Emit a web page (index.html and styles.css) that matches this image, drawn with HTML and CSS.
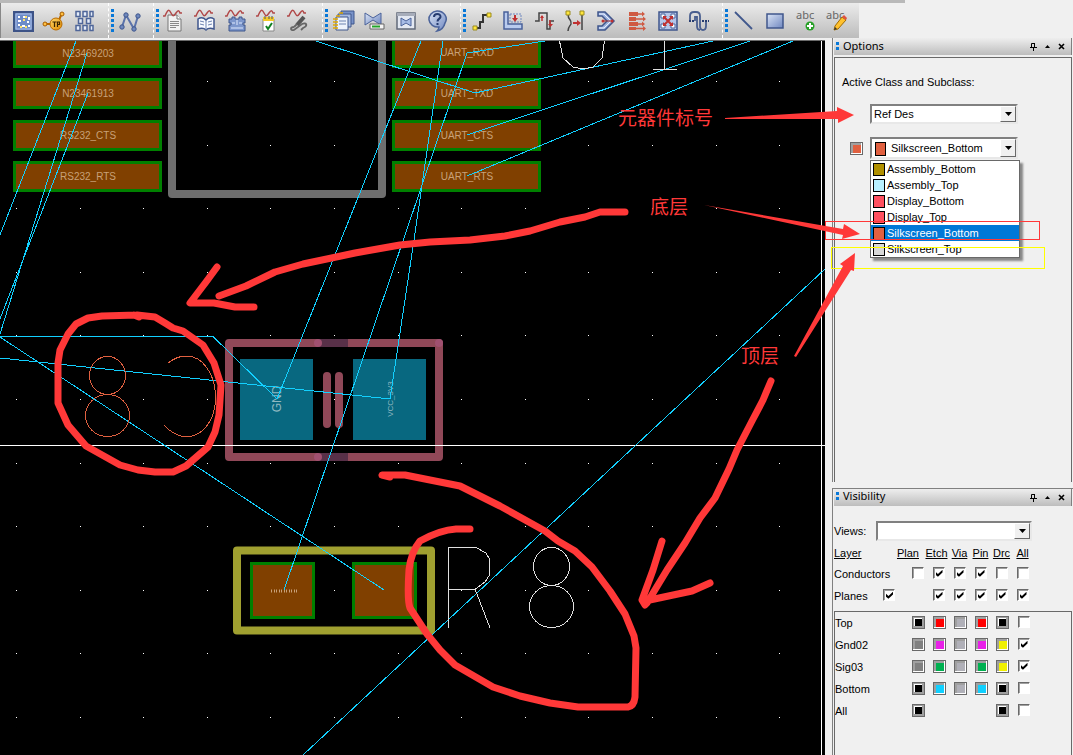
FILE: index.html
```html
<!DOCTYPE html>
<html lang="en">
<head>
<meta charset="utf-8">
<title>PCB Editor</title>
<link rel="stylesheet" href="styles.css">
</head>
<body>
<svg class="defs" aria-hidden="true">
  <defs>
    <linearGradient id="blue" x1="0" y1="0" x2="1" y2="1"><stop offset="0" stop-color="#dbe5f6"/><stop offset="1" stop-color="#6f87c0"/></linearGradient>
    <linearGradient id="gold" x1="0" y1="0" x2="1" y2="1"><stop offset="0" stop-color="#ffd76a"/><stop offset="1" stop-color="#e08a00"/></linearGradient>
    <path id="wave" d="M0 7h2C5 0 6 0 8 4s3 3 5 0 3-3 4 0h2" fill="none" stroke="#b04848" stroke-width="1.5"/>
    <path id="down" d="M0 0h7L3.500 4z"/>
  </defs>
</svg>
<header class="toolbar">
  <div class="strip"></div>
  <nav class="tools" aria-label="Toolbar">
    <div class="group first">
      <button class="tool" aria-label="Grid"><svg viewBox="0 0 24 24"><path d="M3 3h19v19H3z" fill="#6e8cc8" stroke="#3d5387" stroke-width="2"/><path d="M5 5h15v15H5z" fill="none" stroke="#a9bee6"/><path d="M7 7h2v2H7zm5 0h2v2h-2zm5 1h2v3h-2zM7 11h3v2H7zm9 1h2v2h-2zM7 15h2v2H7zm4 1h3v2h-3zm6 0h2v2h-2z" fill="#fff"/><path d="M12 10h2v2h-2zM14 7h2v2h-2zM9 17h2v2H9zM14 17h2v2h-2z" fill="#ffe36a"/></svg></button>
      <button class="tool" aria-label="Test point"><svg viewBox="0 0 24 24"><path d="M4 15h6M17 11l3-7" stroke="#b86a00" stroke-width="2"/><circle cx="3" cy="15" r="2" fill="#ffc040" stroke="#a65b00"/><circle cx="20" cy="5" r="2" fill="#ffc040" stroke="#a65b00"/><circle cx="14" cy="15" r="6" fill="url(#gold)" stroke="#b86a00"/><path d="M10.500 13h4M12.500 13v5M15.500 18v-5h2v2.500h-2" fill="none" stroke="#3b2600" stroke-width="1.200"/></svg></button>
      <button class="tool" aria-label="Pin array"><svg viewBox="0 0 24 24"><path d="M3 2.500h4v5H3zm7 0h4v5h-4zm7 0h3v5h-3zM5.500 9.500h4v5h-4zm8 0h4v5h-4zM3 16.500h4v5H3zm7 0h4v5h-4zm7 0h3v5h-3z" fill="#e4edfa" stroke="#4f6699" stroke-width="1.500"/></svg></button>
    </div>
    <div class="group"><i class="grip"></i>
      <button class="tool" aria-label="Nodes"><svg viewBox="0 0 24 24"><path d="M4 18L8 6l8 14 4-13" fill="none" stroke="#5a72aa" stroke-width="2"/><g fill="#6f88bd" stroke="#3f568c"><circle cx="4" cy="18" r="2.200"/><circle cx="8" cy="6" r="2.200"/><circle cx="16" cy="20" r="2.200"/><circle cx="20" cy="7" r="2.200"/></g></svg></button>
    </div>
    <div class="group"><i class="grip"></i>
      <button class="tool" aria-label="Report"><svg viewBox="0 0 24 24"><path d="M5 6h9l4 4v12H5z" fill="#f2f2f2" stroke="#777"/><path d="M14 6v4h4" fill="#fff" stroke="#777"/><path d="M7 12.500h9M7 14.500h9M7 16.500h9M7 18.500h6" stroke="#888"/><use href="#wave"/></svg></button>
      <button class="tool" aria-label="Library"><svg viewBox="0 0 24 24"><path d="M4 10c3-2 6-1 8 1 2-2 5-3 8-1v10c-3-1-6-1-8 1-2-2-5-2-8-1z" fill="#f7faff" stroke="#3f568c" stroke-width="1.500"/><path d="M12 11v10M6 12l4 1M6 15l4 1M14 13l4-1M14 16l4-1" stroke="#6d83b0"/><use href="#wave"/></svg></button>
      <button class="tool" aria-label="Model"><svg viewBox="0 0 24 24"><path d="M4 10h3V8h3v2h4V8h3v2h3v4h-2v2h2v6H4v-6h2v-2H4z" fill="#7d97cc" stroke="#3f568c"/><path d="M7 14h3m4 0h3M12 11v5M6 19h12" stroke="#e0eaff"/><use href="#wave"/></svg></button>
      <button class="tool" aria-label="Audit"><svg viewBox="0 0 24 24"><path d="M7 10h11v12H7z" fill="#fff" stroke="#888"/><path d="M7 8h11v4H7z" fill="#f2c928"/><path d="M9 7v3m4-3v3m3-3v3" stroke="#555"/><path d="M10 17l2 3 4-6" fill="none" stroke="#108020" stroke-width="2"/><use href="#wave"/></svg></button>
      <button class="tool" aria-label="Probe"><svg viewBox="0 0 24 24"><path d="M17 8l-7 8" stroke="#555" stroke-width="4"/><path d="M10 15l-3 3M7 18c-4 0-4 4 0 3l8-6c5-2 6 2 1 4l-2 2" fill="none" stroke="#666" stroke-width="1.800"/><use href="#wave"/></svg></button>
    </div>
    <div class="group"><i class="grip"></i>
      <button class="tool" aria-label="Pages"><svg viewBox="0 0 24 24"><path d="M9 2h13v13H9z" fill="#7892c8" stroke="#3f568c"/><path d="M6 5h13v13H6z" fill="#a9bce2" stroke="#3f568c"/><path d="M4 8h12v13H4z" fill="#eef3fc" stroke="#3f568c"/><path d="M7 12h7M7 15h7" stroke="#6d83b0"/><path d="M1 10h5M1 13h5M1 16h5M1 19h5M4 7h4M7 4h4" stroke="#e0a800" stroke-width="1.500"/></svg></button>
      <button class="tool" aria-label="Waive"><svg viewBox="0 0 24 24"><path d="M2 4l8 5 8-5v12l-8-5-8 5z" fill="url(#blue)" stroke="#4a629a"/><path d="M7 15h14v5H7z" fill="#f5f5f5" stroke="#666"/><path d="M9 16.500h8v2H9z" fill="#22a528"/></svg></button>
      <button class="tool" aria-label="Window"><svg viewBox="0 0 24 24"><path d="M3 4h18v16H3z" fill="#e3e8f2" stroke="#626a7a" stroke-width="1.500"/><path d="M3 4h18v3H3z" fill="#a7adba"/><path d="M7 9l5 3 5-3v8l-5-3-5 3z" fill="#a7bce6" stroke="#4a629a"/></svg></button>
      <button class="tool" aria-label="Help"><svg viewBox="0 0 24 24"><path d="M12 2a9 8 0 1 0 2 16c0 2-1 3-2 4 5-1 7-4 8-8A9 8 0 0 0 12 2z" fill="url(#blue)" stroke="#4a629a" stroke-width="1.500"/><path d="M9 8c0-4 7-4 6.500 0-.5 2-3 2-3 4.500M12.500 14v2" fill="none" stroke="#263c70" stroke-width="2"/></svg></button>
    </div>
    <div class="group"><i class="grip"></i>
      <button class="tool" aria-label="Route"><svg viewBox="0 0 24 24"><path d="M5 19h5v-6h3V6h4" fill="none" stroke="#333" stroke-width="2"/><path d="M3 17h4v4H3zM17 4h4v4h-4z" fill="#ffe63c" stroke="#9a8b20"/></svg></button>
      <button class="tool" aria-label="Shove"><svg viewBox="0 0 24 24"><path d="M3 3h4v12h14v5H3z" fill="#b9cbee" stroke="#4a629a" stroke-width="1.500"/><path d="M9 5h11v8H9z" fill="none" stroke="#6f87c0" stroke-dasharray="2 1"/><path d="M13 6v3h-2l3 4 3-4h-2V6z" fill="#c03030"/></svg></button>
      <button class="tool" aria-label="Delay tune"><svg viewBox="0 0 24 24"><path d="M3 12h4V4h8v16h3v-8h4" fill="none" stroke="#444" stroke-width="1.500"/><path d="M10 12V7m8 4v5" stroke="#c03030" stroke-width="1.500"/><path d="M8 9l2-3 2 3zM16 15h5l-2.500 3z" fill="#c03030"/></svg></button>
      <button class="tool" aria-label="Custom smooth"><svg viewBox="0 0 24 24"><path d="M5 5c0 7 4 5 3 10-1 2-3 3-3 7M19 5v16" fill="none" stroke="#444" stroke-width="1.500"/><path d="M10 14h5" stroke="#c03030" stroke-width="2"/><path d="M14 11l4 3-4 3z" fill="#c03030"/><path d="M3 2h4v4H3zM17 2h4v4h-4z" fill="#ffe63c" stroke="#9a8b20"/></svg></button>
      <button class="tool" aria-label="Fan out"><svg viewBox="0 0 24 24"><path d="M4 3h7l9 9-9 9H4v-4h4l5-5-5-5H4z" fill="#9db3df" stroke="#3f568c" stroke-width="1.500"/><path d="M5 5h5l7 7-7 7H5" fill="none" stroke="#e9f0ff"/><path d="M8 12h10" stroke="#a03030"/><circle cx="9" cy="12" r="1.500" fill="#c03030"/><circle cx="18" cy="12" r="1.500" fill="#c03030"/></svg></button>
      <button class="tool" aria-label="Bus route"><svg viewBox="0 0 24 24"><path d="M4 3h9v4H4zm0 5h7v4H4zm0 5h9v4H4zm0 5h7v3H4z" fill="#cf5a42"/><path d="M11 5h8M9 10h11M11 15h8M9 19.500h11" stroke="#cf5a42" stroke-width="1.500"/><path d="M17 2.500L20 5l-3 2.500zM18 7.500l3 2.500-3 2.500zM17 12.500l3 2.500-3 2.500zM18 17l3 2.500-3 2.500z" fill="#cf5a42"/></svg></button>
      <button class="tool" aria-label="Spread"><svg viewBox="0 0 24 24"><path d="M3 3h18v18H3z" fill="#b4c6ea" stroke="#3f568c" stroke-width="1.500"/><path d="M5 5h4v4H5zm10 0h4v4h-4zM5 15h4v4H5zm10 0h4v4h-4z" fill="#fff" stroke="#4a629a"/><path d="M8 8l8 8m0-8l-8 8" stroke="#c03030" stroke-width="2"/><path d="M7 7h4L7 11zm10 0v4l-4-4zM7 17v-4l4 4zm10 0h-4l4-4z" fill="#c03030"/></svg></button>
      <button class="tool" aria-label="Loop"><svg viewBox="0 0 24 24"><path d="M3 11V7q0-4 4-4h2q4 0 4 4v10q0 4 3 4t3-4v-5M8 12V8h2v9q0 4 3 4" fill="none" stroke="#4a5f8f" stroke-width="1.800"/><path d="M2 12h5m8 0h7" stroke="#263c70" stroke-width="2" stroke-dasharray="2 1"/></svg></button>
    </div>
    <div class="group"><i class="grip"></i>
      <button class="tool" aria-label="Line"><svg viewBox="0 0 24 24"><path d="M3 3l17 17" stroke="#40578c" stroke-width="1.800"/></svg></button>
      <button class="tool" aria-label="Rectangle"><svg viewBox="0 0 24 24"><path d="M4 5h16v14H4z" fill="url(#blue)" stroke="#40578c" stroke-width="1.500"/></svg></button>
      <button class="tool" aria-label="Add text"><svg viewBox="0 0 24 24"><text x="2" y="10" class="abc">abc</text><circle cx="16" cy="17" r="4.500" fill="#28a028"/><path d="M16 14v6m-3-3h6" stroke="#fff" stroke-width="2"/></svg></button>
      <button class="tool" aria-label="Edit text"><svg viewBox="0 0 24 24"><text x="1" y="10" class="abc">abc</text><path d="M10 17l7-9 4 3-8 9-4 1z" fill="#ffc12e" stroke="#a06a00"/><path d="M17 8l4 3 1-2-3-3z" fill="#e05040"/><path d="M9 21l1-3 2 2z" fill="#333"/></svg></button>
    </div>
  </nav>
</header>
<div class="workspace">
  <main class="board">
    <svg class="drawing" role="img" aria-label="Board layout">
      <g transform="translate(0 -41)">
        <g class="dots">
          <path d="M16 81.500H825M16 145.500H825M16 208.500H825M16 272.500H825M16 335.500H825M16 399.500H825M16 463.500H825M16 526.500H825M16 590.500H825M16 653.500H825M16 717.500H825"/>
        </g>
        <g class="pad">
          <path d="M14.500 30.500h146v36h-146zM14.500 79.500h146v28h-146zM14.500 121.500h146v28h-146zM14.500 162.500h146v28h-146zM393.500 30.500h146v36h-146zM393.500 79.500h146v28h-146zM393.500 121.500h146v28h-146zM393.500 162.500h146v28h-146zM251.500 563.500h62v54h-62zM353.500 563.500h62v54h-62z"/>
        </g>
        <path d="M172 41V194H382V41" fill="none" stroke="#6e6e6e" stroke-width="8" stroke-linejoin="round"/>
        <path d="M237 550.500H431V630.500H237z" fill="none" stroke="#a0a030" stroke-width="8" stroke-linejoin="round"/>
        <path d="M240 359h73v81h-73zM353 359h73v81h-73z" fill="#086880"/>
        <path d="M229 343H439V457H229z" fill="none" stroke="#904858" stroke-width="8" stroke-linejoin="round"/>
        <path d="M318 343h30M318 457h30" stroke="#583048" stroke-width="8"/>
        <g fill="#a05070"><circle cx="318" cy="343" r="4"/><circle cx="318" cy="457" r="4"/><circle cx="439" cy="343" r="4"/></g>
        <path d="M327 376V424M339 376V424" stroke="#904858" stroke-width="8" stroke-linecap="round"/>
        <g class="net">
          <text x="88" y="57">N23469203</text><text x="88" y="97">N23461913</text><text x="88" y="139">RS232_CTS</text><text x="88" y="180">RS232_RTS</text>
          <text x="467" y="56">UART_RXD</text><text x="467" y="97">UART_TXD</text><text x="467" y="139">UART_CTS</text><text x="467" y="180">UART_RTS</text>
        </g>
        <path d="M271 591h26" stroke="#c8a078" stroke-width="3" stroke-dasharray="1 2 1 1"/>
        <text class="gnd" transform="translate(281 399) rotate(-90)">GND</text>
        <text class="vcc" transform="translate(393 399) rotate(-90)">VCC_3V3</text>
        <path class="white" d="M0 445.500H825M821.500 41V755"/>
        <g class="rats">
          <path d="M76 41L0 235M87 53L0 334M88 93L0 319M0 336.500H213L277 399M0 358L390 399M0 337L384 590M316 41L475 93L713 41M545 41L467 53L284 590M421 41L277 399M443 41L414 240L390 399M467 135L750 41M467 176L793 41M825 269L303 755"/>
        </g>
        <g class="silk bottom">
          <ellipse cx="107.500" cy="375.500" rx="18" ry="19"/><ellipse cx="107.500" cy="415.500" rx="22" ry="21"/>
          <path d="M168 363Q177 356 186 356Q199 356 207 368Q216 380 215.500 400Q215 416 206 427Q197 437 186 437Q174 436 164 425"/>
        </g>
        <g class="silk top">
          <path d="M448.500 628V547.500H476L486 553L489.500 559V575L485 582L475 589.500H448M475 589L490 628M559.500 41L563 58L573 67L583 69L593 67L602 58L604.500 41M664.500 41V69M653 69.500H677"/>
          <ellipse cx="551.500" cy="566.500" rx="18" ry="19"/><ellipse cx="551.500" cy="606.500" rx="22" ry="21"/>
        </g>
      </g>
    </svg>
  </main>
  <aside class="side">
    <section class="panel options">
      <div class="title"><i class="grip small"></i><h2>Options</h2>
        <button class="mini" aria-label="Pin"><svg viewBox="0 0 7 9"><path d="M1.500 5V1.500h3V5M0 5.500h7M3.500 6v3M4.500 1v4" fill="none" stroke="#000"/></svg></button>
        <button class="mini" aria-label="Collapse"><svg viewBox="0 0 7 9"><path d="M1 6h5L3.500 3z"/></svg></button>
        <button class="mini" aria-label="Close"><svg viewBox="0 0 7 9"><path d="M1 2l5 5M6 2L1 7" stroke="#000" stroke-width="1.600"/></svg></button>
      </div>
      <div class="body">
        <label class="caption" for="cls">Active Class and Subclass:</label>
        <div class="field"><span class="combo"><select id="cls"><option>Ref Des</option></select><span class="arrow"><svg viewBox="0 0 7 4"><use href="#down"/></svg></span></span></div>
        <div class="field sub">
          <button class="swatch orange" aria-label="Subclass colour"></button>
          <span class="combo tall"><i class="chip orange"></i><select class="indent" aria-label="Subclass"><option>Silkscreen_Bottom</option></select><span class="arrow"><svg viewBox="0 0 7 4"><use href="#down"/></svg></span>
            <ul class="list" role="listbox" aria-label="Subclasses">
              <li role="option"><i class="chip olive"></i>Assembly_Bottom</li>
              <li role="option"><i class="chip pale"></i>Assembly_Top</li>
              <li role="option"><i class="chip rose"></i>Display_Bottom</li>
              <li role="option"><i class="chip rose"></i>Display_Top</li>
              <li role="option" aria-selected="true"><i class="chip orange"></i>Silkscreen_Bottom</li>
              <li role="option"><i class="chip silver"></i>Silkscreen_Top</li>
            </ul>
          </span>
        </div>
      </div>
    </section>
    <section class="panel visibility">
      <div class="title"><i class="grip small"></i><h2>Visibility</h2>
        <button class="mini" aria-label="Pin"><svg viewBox="0 0 7 9"><path d="M1.500 5V1.500h3V5M0 5.500h7M3.500 6v3M4.500 1v4" fill="none" stroke="#000"/></svg></button>
        <button class="mini" aria-label="Collapse"><svg viewBox="0 0 7 9"><path d="M1 6h5L3.500 3z"/></svg></button>
        <button class="mini" aria-label="Close"><svg viewBox="0 0 7 9"><path d="M1 2l5 5M6 2L1 7" stroke="#000" stroke-width="1.600"/></svg></button>
      </div>
      <div class="views"><label for="views">Views:</label><span class="combo"><select id="views"><option></option></select><span class="arrow"><svg viewBox="0 0 7 4"><use href="#down"/></svg></span></span></div>
      <table class="layers">
        <colgroup><col class="name"><col class="extra"><col class="c"><col class="c"><col class="c"><col class="c"><col class="c"><col class="c"></colgroup>
        <tr class="heads"><th>Layer</th><th colspan="2" class="plan">Plan</th><th><span class="wide">Etch</span></th><th>Via</th><th>Pin</th><th>Drc</th><th>All</th></tr>
        <tr><th colspan="2">Conductors</th><td><input type="checkbox" aria-label="Conductors plan"></td><td><input type="checkbox" checked aria-label="Conductors etch"></td><td><input type="checkbox" checked aria-label="Conductors via"></td><td><input type="checkbox" checked aria-label="Conductors pin"></td><td><input type="checkbox" aria-label="Conductors drc"></td><td><input type="checkbox" aria-label="Conductors all"></td></tr>
        <tr><th>Planes</th><td class="lead"><input type="checkbox" checked aria-label="Planes"></td><td></td><td><input type="checkbox" checked aria-label="Planes etch"></td><td><input type="checkbox" checked aria-label="Planes via"></td><td><input type="checkbox" checked aria-label="Planes pin"></td><td><input type="checkbox" checked aria-label="Planes drc"></td><td><input type="checkbox" checked aria-label="Planes all"></td></tr>
      </table>
      <div class="stack">
        <table class="layers">
          <colgroup><col class="name"><col class="extra"><col class="c"><col class="c"><col class="c"><col class="c"><col class="c"><col class="c"></colgroup>
          <tr><th colspan="2">Top</th><td><button class="swatch black" aria-label="Top plan"></button></td><td><button class="swatch red" aria-label="Top etch"></button></td><td><button class="swatch gray" aria-label="Top via"></button></td><td><button class="swatch red" aria-label="Top pin"></button></td><td><button class="swatch black" aria-label="Top drc"></button></td><td><input type="checkbox" aria-label="Top all"></td></tr>
          <tr><th colspan="2">Gnd02</th><td><button class="swatch dark" aria-label="Gnd02 plan"></button></td><td><button class="swatch magenta" aria-label="Gnd02 etch"></button></td><td><button class="swatch gray" aria-label="Gnd02 via"></button></td><td><button class="swatch magenta" aria-label="Gnd02 pin"></button></td><td><button class="swatch yellow" aria-label="Gnd02 drc"></button></td><td><input type="checkbox" checked aria-label="Gnd02 all"></td></tr>
          <tr><th colspan="2">Sig03</th><td><button class="swatch dark" aria-label="Sig03 plan"></button></td><td><button class="swatch green" aria-label="Sig03 etch"></button></td><td><button class="swatch gray" aria-label="Sig03 via"></button></td><td><button class="swatch green" aria-label="Sig03 pin"></button></td><td><button class="swatch yellow" aria-label="Sig03 drc"></button></td><td><input type="checkbox" checked aria-label="Sig03 all"></td></tr>
          <tr><th colspan="2">Bottom</th><td><button class="swatch black" aria-label="Bottom plan"></button></td><td><button class="swatch cyan" aria-label="Bottom etch"></button></td><td><button class="swatch gray" aria-label="Bottom via"></button></td><td><button class="swatch cyan" aria-label="Bottom pin"></button></td><td><button class="swatch black" aria-label="Bottom drc"></button></td><td><input type="checkbox" aria-label="Bottom all"></td></tr>
          <tr><th colspan="2">All</th><td><button class="swatch black" aria-label="All plan"></button></td><td></td><td></td><td></td><td><button class="swatch black" aria-label="All drc"></button></td><td><input type="checkbox" aria-label="All all"></td></tr>
        </table>
      </div>
    </section>
  </aside>
</div>
<svg class="notes">
  <path d="M825.500 221.500H1039.500V239.500H825.500z" class="frame"/>
  <path d="M831.500 247.500H1044.500V268.500H831.500z" class="frame yellow-line"/>
  <g class="ink">
    <path d="M137 315L102 316L88 318L76 324L68 334L60 350L58 363V403L68 425L86 446L120 465L138 470L155 472H173L186 466L208 447L215 432L219 415L221 385L214 363L203 345L183 331L173 328L165 323L155 317L137 315M134 315L139 317"/>
    <path d="M625 212H600L585 217L560 222L530 231L505 236L470 240L430 242L400 245L355 253L303 264L275 272L246 286L219 296M217 267L206 282L190 303L214 303L235 307H254"/>
    <path d="M390 477L382 475H405L430 480L460 486L500 506L545 531L558 541L575 551L592 567L610 591L625 614L634 636L636 648L635 697Q634 706 628 707H578L550 703L520 696L493 687L455 665L440 650L427 634L410 608Q407 600 409 570Q411 552 420 541Q440 530 456 529H470"/>
    <path d="M771 381L763 400L752 421L737 450L729 469L715 498L700 518L685 543L667 570L647 603M662 541L653 570L642 600L645 605M710 583L692 591L645 601"/>
  </g>
  <g class="pointer">
    <path d="M725 118L837 111V107L854 115L838 123V119L725 119z"/>
    <path d="M704 205L843 229L844 224L860 234L842 239L843 235z"/>
    <path d="M794 356L843 266L840 264L855 253L854 271L851 270L796 357z"/>
  </g>
  <g class="zh"><text x="618" y="125">元器件标号</text><text x="650" y="214">底层</text><text x="741" y="363">顶层</text></g>
</svg>
</body>
</html>
```

FILE: styles.css
```css
* { box-sizing: border-box; }
body {
  margin: 0;
  height: 100vh;
  display: flex;
  flex-direction: column;
  position: relative;
  overflow: hidden;
  background: #f0f0f0;
  color: #000;
  font: 11px/14px "Liberation Sans", Arial, sans-serif;
}
button { padding: 0; border: 0; background: none; }
.defs { position: absolute; width: 0; height: 0; }

.strip { width: 905px; max-width: 100%; height: 3px; background: #b9b9b9; }
.tools {
  display: flex;
  width: fit-content;
  height: 35px;
  background: linear-gradient(#ebebeb, #bcbcbc);
}
.group {
  display: flex;
  align-items: center;
  padding-right: 8px;
  border-left: 1px dashed #fff;
}
.group.first { border-left: 1px solid #888; padding-left: 6px; }
.group:last-child { padding-right: 7px; }
.grip {
  flex: none;
  width: 3px;
  height: 23px;
  margin-left: 2px;
  background: repeating-linear-gradient(#0878d8 0 3px, transparent 3px 5px);
}
.tool { display: grid; place-items: center; width: 31px; height: 30px; }
.tool svg { width: 24px; height: 24px; }
.abc { font: 11px "Noto Sans", sans-serif; fill: #666; }

.workspace { flex: 1; display: flex; min-height: 0; }
.board {
  flex: 1;
  min-width: 0;
  margin-top: 2px;
  border-top: 1px solid #6a6a6a;
  background: #000;
}
.drawing { display: block; width: 100%; height: 100%; }
.dots path { stroke: #fff; stroke-dasharray: 1 62.6; shape-rendering: crispEdges; }
.pad path { fill: #804000; stroke: #008000; stroke-width: 3; }
.net text { font-size: 10px; fill: #c8a078; text-anchor: middle; }
.gnd, .vcc { fill: #90b8c0; text-anchor: middle; }
.gnd { font-size: 12px; }
.vcc { font-size: 8px; }
.white { stroke: #fff; }
.rats path, .silk * { fill: none; shape-rendering: crispEdges; }
.rats { stroke: #12d0ff; }
.bottom { stroke: #e06040; }
.top { stroke: #e0e0e0; }

.side { width: 248px; padding-left: 7px; display: flex; flex-direction: column; gap: 6px; }
.panel {
  min-height: 0;
  display: flex;
  flex-direction: column;
  border-left: 1px solid #808080;
  padding: 0 1px;
}
.options { flex: 5 1 0; }
.visibility { flex: 3 1 0; border-top: 1px solid #808080; }
.title {
  display: flex;
  align-items: center;
  height: 17px;
  padding: 0 3px 2px 0;
  background: linear-gradient(#eee, #bdbdbd);
  border-right: 1px solid #808080;
}
.grip.small { height: 8px; }
.title h2 { flex: 1; margin: 0 0 0 4px; font: 11px/14px "Noto Sans", sans-serif; }
.mini { display: flex; justify-content: center; width: 14px; padding-top: 2px; }
.mini svg { width: 7px; height: 9px; }
.body {
  flex: 1;
  margin-top: 2px;
  border: 1px solid #696969;
  border-bottom: 0;
  padding: 17px 8px 0 7px;
}
.caption { display: block; }
.field { display: flex; align-items: center; margin: 15px 0 0 28px; }
.field.sub { margin: 13px 0 0 8px; gap: 7px; }
.combo {
  position: relative;
  display: flex;
  width: 148px;
  height: 20px;
  border: 2px solid;
  border-color: #808080 #e8e8e8 #e8e8e8 #808080;
  background: #fff;
}
.combo.tall { height: 22px; }
.combo select {
  flex: 1;
  min-width: 0;
  appearance: none;
  border: 0;
  padding: 0 0 0 2px;
  background: none;
  color: #000;
  font: inherit;
}
.combo .indent { padding-left: 5px; }
.arrow {
  display: grid;
  place-items: center;
  width: 16px;
  background: #f0f0f0;
  border: 1px solid;
  border-color: #fff #696969 #696969 #fff;
}
.arrow svg { width: 7px; height: 4px; }
.chip { flex: none; width: 12px; height: 13px; border: 1px solid #000; }
.combo > .chip { margin: 3px 0 0 3px; height: 14px; width: 11px; }
.list {
  position: absolute;
  top: 21px;
  left: -2px;
  width: 150px;
  margin: 0;
  padding: 0;
  list-style: none;
  background: #fff;
  border: 1px solid #696969;
  box-shadow: 3px 3px 2px #888;
}
.list li { display: flex; align-items: center; height: 16px; padding-left: 2px; gap: 2px; }
.list li[aria-selected] { background: #0078d7; color: #fff; }
.olive { background: #b09000; }
.pale { background: #b8f0ff; }
.rose { background: #ff5060; }
.orange { background: #e06040; }
.silver { background: #d8d8d8; }

.swatch {
  display: inline-block;
  width: 13px;
  height: 13px;
  border: 1px solid #696969;
  box-shadow: inset -1px -1px #fff, inset 2px 2px #a0a0a0;
  vertical-align: top;
}
.black { background: #000; box-shadow: inset 1px 1px #a0a0a0, inset -2px -2px #a0a0a0, inset 2px 2px #fff; }
.red { background: #f00; }
.gray { background: #b0b0b8; }
.dark { background: #808080; }
.magenta { background: #e820e8; }
.green { background: #00b050; }
.yellow { background: #f0f000; }
.cyan { background: #10d0ff; }

.views { display: flex; align-items: center; margin-top: 15px; }
.views label { width: 42px; }
.views .combo { width: 156px; }
.layers { width: 171px; table-layout: fixed; border-collapse: collapse; margin-top: 2px; }
.name { width: 45px; }
.extra { width: 28px; }
.c { width: 21px; }
.layers tr { height: 22px; }
.layers th, .layers td { padding: 0; font-weight: 400; text-align: left; white-space: nowrap; }
.layers th { padding-top: 1px; }
.layers td { text-align: center; }
.layers .heads { height: 20px; }
.layers .heads th { text-align: center; text-decoration: underline; }
.layers .heads th:first-child { text-align: left; }
.layers .heads .plan { text-align: right; padding-right: 9px; }
.wide { display: block; margin-left: -4px; }
.layers .lead { text-align: left; padding-left: 4px; }
.layers input {
  appearance: none;
  display: inline-block;
  position: relative;
  width: 12px;
  height: 12px;
  margin: 0;
  border: 1px solid;
  border-color: #696969 #fff #fff #696969;
  box-shadow: inset 1px 1px #a0a0a0;
  background: #fff;
  vertical-align: top;
}
.layers input:checked::before {
  content: "";
  position: absolute;
  inset: 2px 1px 1px 2px;
  background: #000;
  clip-path: polygon(0 30%, 35% 60%, 100% 0, 100% 40%, 35% 100%, 0 70%);
}
.stack { flex: 1; border: 1px solid #696969; border-bottom: 0; margin-top: 4px; }
.stack .layers { margin-top: 0; }

.notes { position: absolute; top: 0; left: 0; width: 100%; height: 100%; pointer-events: none; }
.frame { fill: none; stroke: #ff3838; shape-rendering: crispEdges; }
.yellow-line { stroke: #ff0; }
.ink path { fill: none; stroke: #ff3838; stroke-width: 7; stroke-linecap: round; stroke-linejoin: round; }
.pointer { fill: #ff3838; }
.zh text { font: 19px "Noto Sans CJK SC", sans-serif; fill: #ff3838; }
```
